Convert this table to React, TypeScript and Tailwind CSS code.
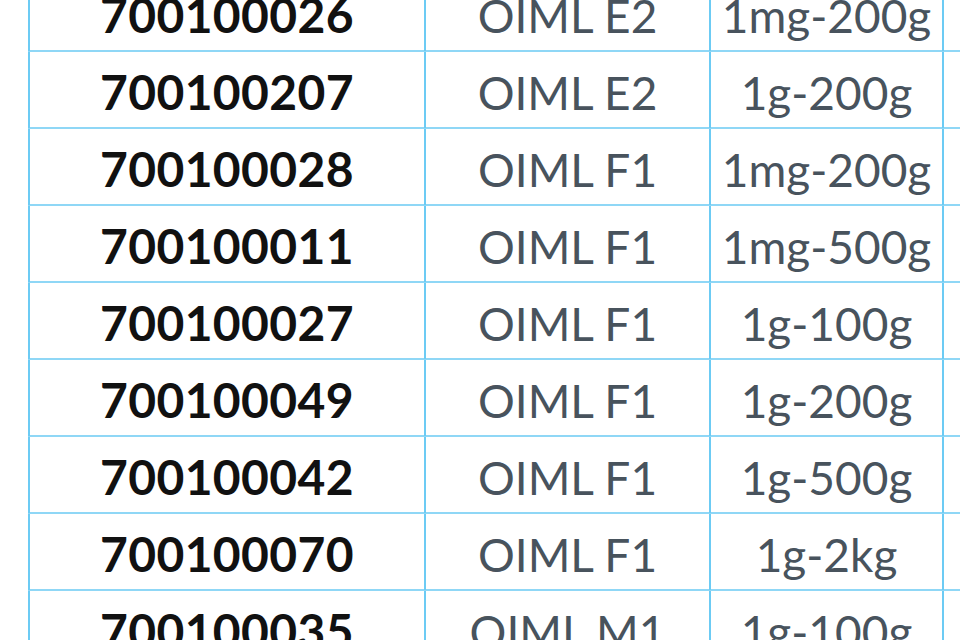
const rows = [
  ["700100026", "OIML E2", "1mg-200g"],
  ["700100207", "OIML E2", "1g-200g"],
  ["700100028", "OIML F1", "1mg-200g"],
  ["700100011", "OIML F1", "1mg-500g"],
  ["700100027", "OIML F1", "1g-100g"],
  ["700100049", "OIML F1", "1g-200g"],
  ["700100042", "OIML F1", "1g-500g"],
  ["700100070", "OIML F1", "1g-2kg"],
  ["700100035", "OIML M1", "1g-100g"],
];

export default function App() {
  return (
    <div className="h-[640px] w-[960px] overflow-hidden bg-white font-['Lato',sans-serif]">
      <div className="-mt-[25px] pl-[28px]">
        {rows.map(([code, cls, range]) => (
          <div
            key={code}
            className="grid h-[77px] grid-cols-[396px_285px_233px_120px] border-b-2 border-[#8fd7f6]"
          >
            <div className="flex items-center justify-center border-l-2 border-[#6ccbf4] pt-[4px] text-[48px] font-bold tracking-[0.4px] text-[#111]">
              {code}
            </div>
            <div className="flex items-center justify-center border-l-2 border-[#6ccbf4] pt-[4px] text-[46px] text-[#48535d]">
              {cls}
            </div>
            <div className="flex items-center justify-center border-l-2 border-[#6ccbf4] pt-[4px] text-[46px] text-[#48535d]">
              {range}
            </div>
            <div className="border-l-2 border-[#6ccbf4]" />
          </div>
        ))}
      </div>
    </div>
  );
}
